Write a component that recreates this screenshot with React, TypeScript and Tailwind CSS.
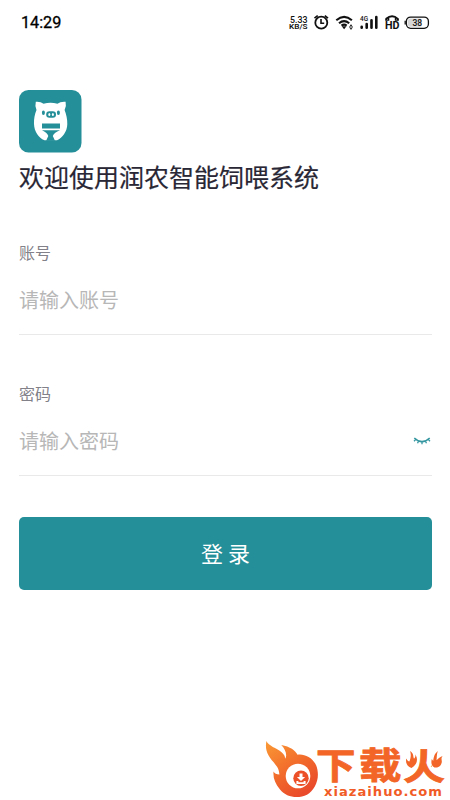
import React from "react";

function StatusBar() {
  return (
    <header className="flex h-[45px] items-center justify-between pl-[2px] font-['Roboto',sans-serif] text-black">
      <span className="pt-px text-[16.2px] font-normal leading-[18px] [-webkit-text-stroke:0.3px_#000]">14:29</span>
      <svg width="142" height="24" viewBox="288 11 142 24" className="mr-[2px]" fill="none" stroke="#111">
        <g fill="#111" stroke="none" fontFamily="Roboto, sans-serif" fontWeight="500">
          <text x="290" y="22.7" fontSize="9" textLength="17.5" lengthAdjust="spacingAndGlyphs">5.33</text>
          <text x="289" y="29.2" fontSize="6.8" fontWeight="600" textLength="18.5" lengthAdjust="spacingAndGlyphs">KB/S</text>
          <text x="360" y="21" fontSize="6.8" textLength="8" lengthAdjust="spacingAndGlyphs">4G</text>
          <text x="385" y="29.4" fontSize="10.2" fontWeight="700" textLength="14.5" lengthAdjust="spacingAndGlyphs">HD</text>
        </g>
        <circle cx="321.3" cy="22.7" r="6" strokeWidth="1.8" />
        <path d="M321 19v4.3h3.2" strokeWidth="1.6" />
        <path d="M314.5 18.2l3.2-2.6M328 18.2l-3.2-2.6" strokeWidth="1.7" />
        <g strokeWidth="2.1">
          <path d="M336.3 20.2q7.8-6.5 15.6 0" />
          <path d="M339 23.2q5.1-4.2 10.2 0" />
          <path d="M341.5 25.7q2.6-2 5.2 0" />
        </g>
        <path d="M341.7 26.2h4.8l-2.4 3z" fill="#111" stroke="none" />
        <path d="M351 24.7v4.6M349.5 26.8l1.5-2 1.5 2M349.5 27.3l1.5 2 1.5-2" strokeWidth=".8" />
        <g strokeWidth="2.6" strokeLinecap="round">
          <path d="M361.7 26.7v1M366.7 24v3.8M371.5 20.3v7.5M376.3 17v10.8" />
        </g>
        <path d="M386.2 20.3v-1.5q5.9-5.2 11.7 0v1.5" strokeWidth="1.8" />
        <path d="M385.3 20.1h3.3v-2M398.8 20.1h-3.3v-2" strokeWidth="1.4" />
        <rect x="406.4" y="17.1" width="22" height="11.2" rx="4.2" fill="#fff" strokeWidth="1.3" />
        <rect x="408" y="18.6" width="14" height="8.2" rx="2.5" fill="#d5d5d5" stroke="none" />
        <path d="M405.2 20.8v3.8" strokeWidth="1.3" />
        <text x="412.5" y="25.8" fontFamily="Roboto, sans-serif" fontSize="8.5" fontWeight="500" fill="#111" stroke="none">38</text>
      </svg>
    </header>
  );
}

function PigLogo() {
  return (
    <svg width="63" height="63" viewBox="0 0 63 63" className="mt-[45px] shrink-0" aria-label="润农">
      <rect x="0" y="0" width="62.5" height="62.5" rx="9.5" fill="#258f99" />
      <path
        d="M16.8 11.8 Q21.5 11.4 24.6 13.7 Q31.5 11.6 38.4 13.7 Q41.5 11.4 46.6 11.8 Q47.6 16 45.6 20 C47.2 24 48.4 29 48.3 34 C48.2 41.5 43.5 48 38 50.3 L25.5 50.3 C19.5 48 15.3 41.5 15 34 C14.8 29 15.7 24 17.5 20 Q15.7 16 16.8 11.8Z"
        fill="#fff"
      />
      <path d="M23 33.5h18v5H23zM23 40.3h18Q35.2 42.5 33.8 46L36 50.8h-8.9L29.3 46Q28 42.5 23 40.3z" fill="#258f99" />
      <ellipse cx="24.4" cy="22.7" rx="1.5" ry="2.2" fill="#258f99" />
      <ellipse cx="39.4" cy="22.7" rx="1.5" ry="2.2" fill="#258f99" />
      <rect x="27.2" y="21.3" width="9.8" height="6.4" rx="3.2" fill="#258f99" />
      <ellipse cx="30.3" cy="24.5" rx="1" ry="1.5" fill="#fff" />
      <ellipse cx="33.9" cy="24.5" rx="1" ry="1.5" fill="#fff" />
    </svg>
  );
}

function ClosedEye() {
  return (
    <svg width="18" height="9" viewBox="0 0 18 9" fill="none" stroke="#3597a1" className="mr-px">
      <path d="M1.3 1Q9 8.3 16.7 1" strokeWidth="1.5" />
      <path d="M2.8 2.4L1 4.2M5.6 4.2L4.5 6.3M9 4.8v2.5M12.4 4.2l1.1 2.1M15.2 2.4L17 4.2" strokeWidth="1.3" />
    </svg>
  );
}

function Field({ label, placeholder, children }: { label: string; placeholder: string; children?: React.ReactNode }) {
  return (
    <div className="flex flex-col border-b border-[#e9e9e9] pb-[19px]">
      <label className="h-6 text-[16px] leading-6 text-[#828088]">{label}</label>
      <div className="mt-[21px] flex h-[30px] items-center justify-between">
        <span className="text-[20px] leading-[30px] text-[#b7b7b7]">{placeholder}</span>
        {children}
      </div>
    </div>
  );
}

function SiteMark() {
  return (
    <svg width="184" height="64" viewBox="262 736 184 64" className="-mr-[13px] mt-auto shrink-0 self-end">
      <defs>
        <linearGradient id="flame" x1="0" y1="0" x2="0.65" y2="1">
          <stop offset="0" stopColor="#fa9a35" />
          <stop offset="0.55" stopColor="#f26b2b" />
          <stop offset="1" stopColor="#e94a2b" />
        </linearGradient>
      </defs>
      <g transform="translate(1 0)">
        <path
          d="M266.4 741 C268.5 746 276.5 748 281.3 752 C284.5 754.7 285.3 756.8 285 758.7 C287.4 756.5 286 749.5 281.3 745 C290 746.6 295.6 750.5 297.5 754.7 C304 753.5 312.5 757.5 316 765 C321 777 315.5 790 307 794.7 C298 799.2 286 797.3 280 789.5 C275 783.4 273 778 273.5 771.5 C274.5 773.4 276.5 774.4 279.4 774.5 C279 765.5 273 763.5 268.6 755.6 C265.7 750.5 265.5 746 266.4 741Z"
          fill="url(#flame)"
        />
        <circle cx="298" cy="776" r="12.3" fill="#fff" />
        <circle cx="301" cy="778.3" r="7.7" fill="#ec5029" />
        <path d="M299.5 773.5h3v3.4h2.6l-4.1 4-4.1-4h2.6zM296.4 781h2v1.2h5.2V781h2v3h-9.2z" fill="#fff" />
      </g>
      <g fill="#f26526" stroke="#f26526" strokeWidth=".8" fontFamily="'Noto Sans CJK SC', sans-serif" fontSize="36" fontWeight="700">
        <text x="317" y="778.8" textLength="39.5" lengthAdjust="spacingAndGlyphs">下</text>
        <text x="360" y="779.2" textLength="42.5" lengthAdjust="spacingAndGlyphs">载</text>
        <text x="404" y="779.8" textLength="42" lengthAdjust="spacingAndGlyphs">火</text>
      </g>
      <path d="M404 752h13.5v17.5H404zM431 750H446v19h-13z" fill="#fff" />
      <path
        d="M411 751c4.2 2.6 2.8 5.5 4 7.7 1.5-1.2 1.6-2.8 1.2-4.5 3.5 5.3 1.7 10.7-3.8 13.8-4-1.3-6-4.7-5.2-9.6 1.2 2.2 2 2.8 3.2 3.1 1.3-3.5 2-6.8.6-10.5zM438.8 751c-1.4 4-.8 6.8-1.3 9.3 1.7-2 3.8-3.8 6.2-4.4-2.2 2.3-.6 4.6-.9 6.2-.7 4.5-4.2 6-7.4 5.3-3.1-1.5-3.5-5.2-2.6-8.3l1.4 2c.6-4.6 1.1-7 4.6-10.1z"
        fill="#f26526"
      />
      <text x="325" y="795.6" fontFamily="'DejaVu Sans', sans-serif" fontSize="13" fontWeight="700" fill="#f15c26" textLength="119" lengthAdjust="spacingAndGlyphs" letterSpacing="1">xiazaihuo.com</text>
    </svg>
  );
}

export default function App() {
  return (
    <main className="flex h-[800px] w-full max-w-[450px] flex-col overflow-hidden bg-white pl-[19px] pr-[18px] font-['Noto_Sans_CJK_SC',sans-serif]">
      <StatusBar />
      <PigLogo />
      <h1 className="mt-[5px] h-9 whitespace-nowrap text-[25px] font-normal leading-9 text-[#292735] [-webkit-text-stroke:0.2px_#292735]">
        欢迎使用润农智能饲喂系统
      </h1>
      <form className="mt-[46px] flex flex-col">
        <Field label="账号" placeholder="请输入账号" />
        <div className="mt-[46px]">
          <Field label="密码" placeholder="请输入密码">
            <ClosedEye />
          </Field>
        </div>
        <button type="button" className="mt-[41px] h-[73px] rounded-[5px] bg-[#258f99] pb-[2px] text-[22px] text-white">
          登 录
        </button>
      </form>
      <SiteMark />
    </main>
  );
}
